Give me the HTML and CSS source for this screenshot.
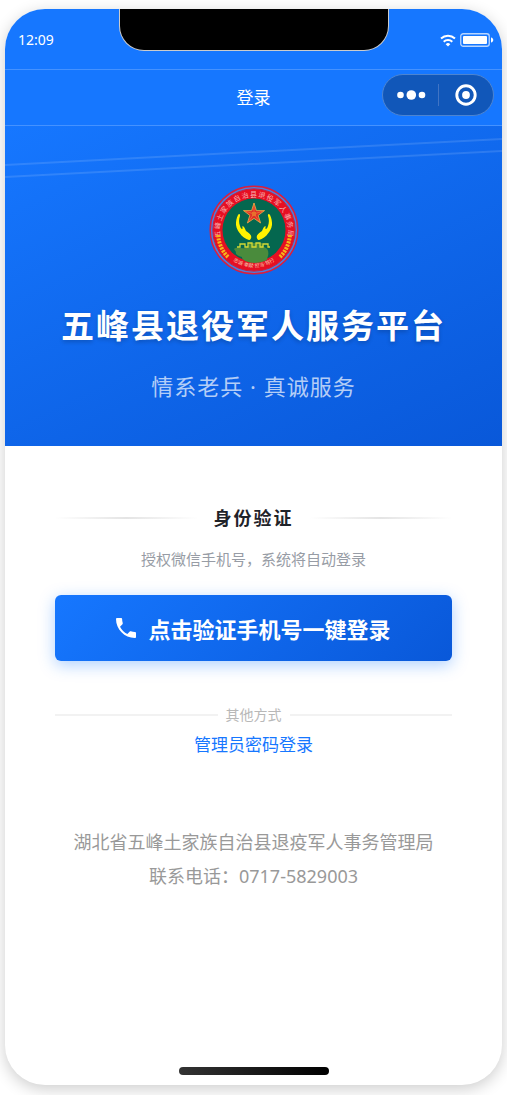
FILE: index.html
```html
<!DOCTYPE html>
<html lang="zh-CN">
<head>
    <meta charset="UTF-8">
    <meta name="viewport" content="width=device-width, initial-scale=1.0">
    <title>登录</title>
    <link rel="stylesheet" href="styles.css">
</head>
<body>
    <div class="phone">
        <div class="status-bar">
            <span class="time">12:09</span>
            <div class="notch"></div>
            <div class="status-icons">
                <svg width="16" height="13" viewBox="0 0 16 13" fill="none" stroke="#fff" stroke-width="2">
                    <path d="M1 4.6a10.2 10.2 0 0 1 14 0"/>
                    <path d="M3.7 7.7a6.2 6.2 0 0 1 8.6 0"/>
                    <path d="M8 12.4L5.7 10.2a3.2 3.2 0 0 1 4.6 0z" fill="#fff" stroke="none"/>
                </svg>
                <svg width="34" height="14" viewBox="0 0 34 14">
                    <rect x="0.75" y="0.75" width="28.5" height="12.5" rx="2.5" fill="none" stroke="#fff" stroke-opacity="0.7" stroke-width="1.3"/>
                    <rect x="3" y="3" width="24" height="8" rx="1" fill="#fff"/>
                    <path d="M31 4.5c3 0.5 3 4.5 0 5z" fill="#fff"/>
                </svg>
            </div>
        </div>

        <header class="nav-bar">
            <h1 class="nav-title">登录</h1>
            <div class="capsule">
                <button type="button" aria-label="更多">
                    <svg width="30" height="22" viewBox="0 0 30 22" fill="#fff">
                        <circle cx="4.5" cy="11" r="3.3"/>
                        <circle cx="15.3" cy="11" r="4.8"/>
                        <circle cx="26" cy="11" r="3.3"/>
                    </svg>
                </button>
                <button type="button" aria-label="关闭">
                    <svg width="22" height="22" viewBox="0 0 22 22">
                        <circle cx="11" cy="11" r="9.2" fill="none" stroke="#fff" stroke-width="2.9"/>
                        <circle cx="11" cy="11" r="3.9" fill="#fff"/>
                    </svg>
                </button>
            </div>
        </header>

        <section class="hero">
            <svg class="hero-lines" viewBox="0 0 498 60" preserveAspectRatio="none" stroke="#fff" stroke-opacity="0.12" stroke-width="2">
                <path d="M0 39L498 13M0 51L498 25"/>
            </svg>
            <svg class="emblem" width="90" height="90" viewBox="0 0 90 90">
                <defs>
                    <path id="arcTop" d="M12 54A34 34 0 1 1 78 54"/>
                    <path id="arcBottom" d="M17 70A38 38 0 0 0 73 70"/>
                </defs>
                <circle cx="45" cy="45" r="43.8" fill="#4d7fdc" stroke="#dc1e3c" stroke-width="1.5"/>
                <circle cx="45" cy="45" r="41" fill="#e60f22"/>
                <circle cx="45" cy="45" r="41.2" fill="none" stroke="#c8203f" stroke-width="1"/>
                <circle cx="45" cy="45" r="31.5" fill="#04674f"/>
                <text class="emblem-top" text-anchor="middle"><textPath href="#arcTop" startOffset="50%">五峰土家族自治县退役军人事务局</textPath></text>
                <text class="emblem-bottom" text-anchor="middle"><textPath href="#arcBottom" startOffset="50%">忠诚·奉献·担当·笃行</textPath></text>
                <path d="M9 50C10 60 14 67 19 72M81 50C80 60 76 67 71 72" fill="none" stroke="#f6b51b" stroke-width="4" stroke-dasharray="2.2 1"/>
                <path d="M45 18L47.4 25.6L55.5 25.6L49.2 30.4L51.6 38L45 33.4L38.4 38L40.8 30.4L34.5 25.6L42.6 25.6Z" fill="#df3029" stroke="#e9b64a" stroke-width="0.8"/>
                <path d="M45 18V29M45 29L51.6 38M45 29L38.4 38M45 29L55.5 25.6M45 29L34.5 25.6" stroke="#f28c3b" stroke-width="0.6"/>
                <path d="M43 27h4v4h-4z" fill="#e8702c"/>
                <path id="hand" d="M29 30C30 28 31.500 29 31 31C29.800 34 29.800 38 31 41C31.600 43 32.800 44.500 33.400 44C33.800 42.500 33 41.500 33.600 41C35.500 41.500 36 44 37 46C40 48 42.500 50 42.300 52C42.200 53.500 41 55.500 40 55C36.500 54 33 51.500 31 48.500C29.500 46.500 27.500 44 27 40C26.700 36.500 27.600 33 29 30Z" fill="#fff300"/>
                <use href="#hand" transform="matrix(-1 0 0 1 90 0)"/>
                <path d="M25 64C29 61 34 65 38 62L41 58H53L55 62C59 63 60 67 59 71C58 73 59 75 56 76Q45 80 36 76C35 74 33 75 33 72C29 71 26 69 27 67Z" fill="#4a8b3c"/>
                <path d="M28 62H31V59H36V62H39V58H43V62H47V58H51V62H54V59H59V62H61" fill="none" stroke="#d4d934" stroke-width="1.3"/>
            </svg>
            <h2 class="hero-title">五峰县退役军人服务平台</h2>
            <p class="hero-subtitle">情系老兵 · 真诚服务</p>
        </section>

        <main class="content">
            <div class="section-title">
                <h3>身份验证</h3>
            </div>
            <p class="hint">授权微信手机号，系统将自动登录</p>
            <button type="button" class="login-btn">
                <svg width="20" height="20" viewBox="3 3 18 18" fill="#fff">
                    <path d="M6.62 10.79c1.44 2.83 3.76 5.14 6.59 6.59l2.2-2.2c.27-.27.67-.36 1.02-.24 1.12.37 2.33.57 3.57.57.55 0 1 .45 1 1V20c0 .55-.45 1-1 1C10.61 21 3 13.39 3 4c0-.55.45-1 1-1h3.5c.55 0 1 .45 1 1 0 1.25.2 2.45.57 3.57.11.35.03.74-.25 1.02z"/>
                </svg>
                点击验证手机号一键登录
            </button>
            <div class="divider">其他方式</div>
            <a href="#" class="admin-link">管理员密码登录</a>
            <footer class="footer">
                <p>湖北省五峰土家族自治县退疫军人事务管理局</p>
                <p>联系电话：0717-5829003</p>
            </footer>
        </main>

        <div class="home-indicator"></div>
    </div>
</body>
</html>
```
FILE: styles.css
```css
* {
    box-sizing: border-box;
}

body {
    margin: 0;
    padding: 9px 5px 10px;
    background: #fff;
    font-family: "Noto Sans", "Noto Sans CJK SC", sans-serif;
}

h1, h2, h3, p {
    margin: 0;
}

button {
    border: 0;
    padding: 0;
    background: none;
    font-family: inherit;
    cursor: pointer;
}

svg {
    display: block;
}

.phone {
    display: flex;
    flex-direction: column;
    min-height: calc(100vh - 19px);
    border-radius: 40px;
    overflow: hidden;
    background: #fff;
    box-shadow: 0 4px 16px rgba(0, 0, 0, 0.2);
}

/* status bar */
.status-bar {
    position: relative;
    display: flex;
    justify-content: space-between;
    align-items: center;
    height: 60px;
    padding: 2px 8px 0 13px;
    background: #1677ff;
    color: #fff;
}

.time {
    font-size: 14px;
    line-height: 20px;
}

.notch {
    position: absolute;
    top: 0;
    left: 50%;
    width: 270px;
    height: 42px;
    transform: translateX(-50%);
    background: #000;
    border: 1px solid rgba(255, 255, 255, 0.8);
    border-top: 0;
    border-radius: 0 0 25px 25px;
}

.status-icons {
    display: flex;
    align-items: center;
    gap: 4px;
}

/* nav bar */
.nav-bar {
    display: grid;
    grid-template-columns: 1fr auto 1fr;
    align-items: center;
    height: 57px;
    padding: 0 8px;
    background: #1677ff;
    border-top: 1px solid #4592ff;
    border-bottom: 1px solid #4592ff;
}

.nav-title {
    grid-column: 2;
    font-size: 17px;
    font-weight: 400;
    line-height: 24px;
    color: #fff;
}

.capsule {
    display: flex;
    justify-self: end;
    width: 112px;
    height: 42px;
    margin-bottom: 5px;
    background: #1157b9;
    border: 1px solid #4d84d0;
    border-radius: 21px;
}

.capsule button {
    display: flex;
    flex: 1;
    justify-content: center;
    align-items: center;
}

.capsule button + button::before {
    content: "";
    width: 1px;
    height: 22px;
    margin-right: 16px;
    background: #4174c4;
}

.capsule button + button {
    justify-content: flex-start;
}

/* hero */
.hero {
    position: relative;
    display: flex;
    flex-direction: column;
    align-items: center;
    padding: 59px 16px 44px;
    background: linear-gradient(155deg, #1677ff 0%, #0958d9 100%);
    color: #fff;
}

.hero-lines {
    position: absolute;
    top: 0;
    left: 0;
    width: 100%;
    height: 60px;
}

.emblem-top {
    font-size: 7px;
    letter-spacing: 1px;
    fill: #f8b3b0;
}

.emblem-bottom {
    font-size: 5px;
    fill: #f8c9b0;
}

.hero-title {
    margin-top: 27px;
    font-size: 33px;
    font-weight: 700;
    line-height: 48px;
    letter-spacing: 2px;
    text-shadow: 0 2px 4px rgba(0, 0, 0, 0.2);
}

.hero-subtitle {
    margin-top: 20px;
    font-size: 22px;
    line-height: 32px;
    letter-spacing: 1px;
    color: rgba(255, 255, 255, 0.7);
}

/* content */
.content {
    display: flex;
    flex: 1;
    flex-direction: column;
    padding: 58px 50px 40px;
    text-align: center;
}

.section-title {
    display: flex;
    align-items: center;
    gap: 16px;
}

.section-title::before,
.section-title::after {
    content: "";
    flex: 1;
    height: 2px;
    background: linear-gradient(90deg, transparent, #e4e4e4, transparent);
}

.section-title h3 {
    font-size: 18px;
    font-weight: 700;
    line-height: 28px;
    letter-spacing: 2px;
    color: #1f2329;
}

.hint {
    margin-top: 15px;
    font-size: 15px;
    line-height: 24px;
    color: #979ca5;
}

.login-btn {
    display: flex;
    justify-content: center;
    align-items: center;
    gap: 12px;
    height: 66px;
    margin-top: 24px;
    border-radius: 6px;
    background: linear-gradient(135deg, #1677ff 0%, #0958d9 100%);
    box-shadow: 0 4px 16px rgba(22, 119, 255, 0.35);
    color: #fff;
    font-size: 22px;
    font-weight: 700;
}

.divider {
    display: flex;
    align-items: center;
    gap: 8px;
    margin-top: 44px;
    font-size: 14px;
    line-height: 20px;
    color: #b8b8b8;
}

.divider::before,
.divider::after {
    content: "";
    flex: 1;
    height: 2px;
    background: #f2f2f2;
}

.admin-link {
    align-self: center;
    margin-top: 8px;
    font-size: 17px;
    line-height: 24px;
    color: #1677ff;
    text-decoration: none;
}

.footer {
    margin-top: 68px;
    font-size: 18px;
    line-height: 34px;
    color: #999;
}

.home-indicator {
    align-self: center;
    width: 150px;
    height: 8px;
    margin-bottom: 10px;
    border-radius: 4px;
    background: linear-gradient(90deg, #333, #000);
}
```
